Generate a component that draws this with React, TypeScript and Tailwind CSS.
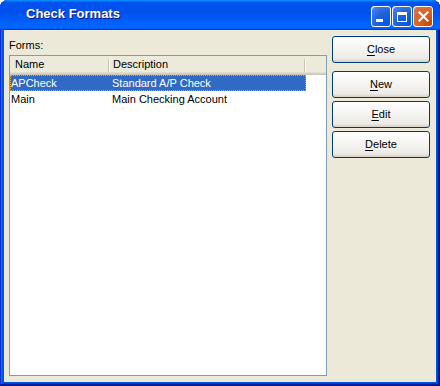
import React from 'react'

const rows = [
  { name: 'APCheck', description: 'Standard A/P Check', selected: true },
  { name: 'Main', description: 'Main Checking Account', selected: false },
]

const buttons = [
  { key: 'C', rest: 'lose', gap: 'mb-[8px]' },
  { key: 'N', rest: 'ew', gap: 'mb-[3px]' },
  { key: 'E', rest: 'dit', gap: 'mb-[3px]' },
  { key: 'D', rest: 'elete', gap: '' },
]

function XpButton({ label, rest, className }: { label: string; rest: string; className: string }) {
  return (
    <button
      className={`w-[98px] h-[27px] rounded-[3px] border border-[#003c74] bg-[linear-gradient(180deg,#ffffff,#ecebe6_86%,#d6d0c5)] text-[11px] text-black flex items-center justify-center ${className}`}
    >
      <span>
        <span className="underline underline-offset-[2px]">{label}</span>
        {rest}
      </span>
    </button>
  )
}

function HeaderDivider() {
  return (
    <div className="flex h-[13px] mt-[3px]">
      <div className="w-[1px] bg-[#c7c5b2]" />
      <div className="w-[1px] bg-white" />
    </div>
  )
}

export default function App() {
  return (
    <div className="w-[440px] h-[386px] flex flex-col rounded-t-[8px] bg-[#0054e3] shadow-[inset_-1px_-1px_#00138c,inset_1px_1px_#0831d9,inset_-2px_-2px_#001ea0,inset_2px_2px_#166aee,inset_-3px_-3px_#003bda,inset_3px_3px_#0855dd] font-['Liberation_Sans',Arial,sans-serif] select-none">
      {/* Title bar */}
      <div className="h-[30px] flex items-start rounded-t-[8px] bg-[linear-gradient(180deg,#0997ff,#0053ee_8%,#0050ee_40%,#0066ff_88%,#0066ff_93%,#005bff_95%,#003dd7_96%,#003dd7)]">
        <div className="pl-[26px] pt-[6px] text-[13px] leading-[15px] font-bold text-white [text-shadow:1px_1px_#0f1089] flex-1">
          Check Formats
        </div>
        <div className="flex gap-[1px] pr-[7px] mt-[6px]">
          <div className="w-[20px] h-[21px] rounded-[3px] border border-white bg-[radial-gradient(circle_at_90%_90%,#0054e9_0%,#2263d5_55%,#4282f9_90%,#ffffff_100%)] relative">
            <div className="absolute left-[4px] bottom-[4px] w-[7px] h-[3px] bg-white" />
          </div>
          <div className="w-[20px] h-[21px] rounded-[3px] border border-white bg-[radial-gradient(circle_at_90%_90%,#0054e9_0%,#2263d5_55%,#4282f9_90%,#ffffff_100%)] flex items-center justify-center">
            <div className="w-[10px] h-[10px] border border-white border-t-[3px]" />
          </div>
          <div className="w-[20px] h-[21px] rounded-[3px] border border-white bg-[radial-gradient(circle_at_90%_90%,#cc4600_0%,#dc6527_55%,#cd7546_90%,#ffffff_100%)] flex items-center justify-center">
            <svg width="11" height="11" viewBox="0 0 11 11">
              <path d="M1.5 1.5 L9.5 9.5 M9.5 1.5 L1.5 9.5" stroke="white" strokeWidth="2" strokeLinecap="square" />
            </svg>
          </div>
        </div>
      </div>

      {/* Body */}
      <div className="flex-1 px-[4px] pb-[4px] flex">
        <div className="flex-1 bg-[#ece9d8] flex pl-[5px] pr-[6px] text-[11px] text-black">
          <div className="w-[318px] flex flex-col pt-[9px] pb-[6px]">
            <div className="leading-[13px] mb-[3px]">Forms:</div>
            <div className="flex-1 border border-[#7f9db9] bg-white flex flex-col">
              <div className="h-[19px] flex bg-[#ebeadb] shadow-[inset_0_-1px_#cbc7b8,inset_0_-2px_#d6d2c2,inset_0_-3px_#e2decd]">
                <div className="w-[98px] pl-[5px] leading-[17px]">Name</div>
                <HeaderDivider />
                <div className="w-[194px] pl-[3px] leading-[17px]">Description</div>
                <HeaderDivider />
                <div className="flex-1" />
              </div>
              {rows.map((row) => (
                <div
                  key={row.name}
                  className={`w-[296px] h-[16px] leading-[16px] flex ${
                    row.selected
                      ? 'bg-[#316ac5] text-white outline-1 outline-dotted outline-[#e0a340] -outline-offset-1'
                      : ''
                  }`}
                >
                  <span className="w-[101px] pl-[1px]">{row.name}</span>
                  <span className="pl-[1px]">{row.description}</span>
                </div>
              ))}
            </div>
          </div>
          <div className="ml-[5px] pt-[6px] flex flex-col">
            {buttons.map((b) => (
              <XpButton key={b.key} label={b.key} rest={b.rest} className={b.gap} />
            ))}
          </div>
        </div>
      </div>
    </div>
  )
}
